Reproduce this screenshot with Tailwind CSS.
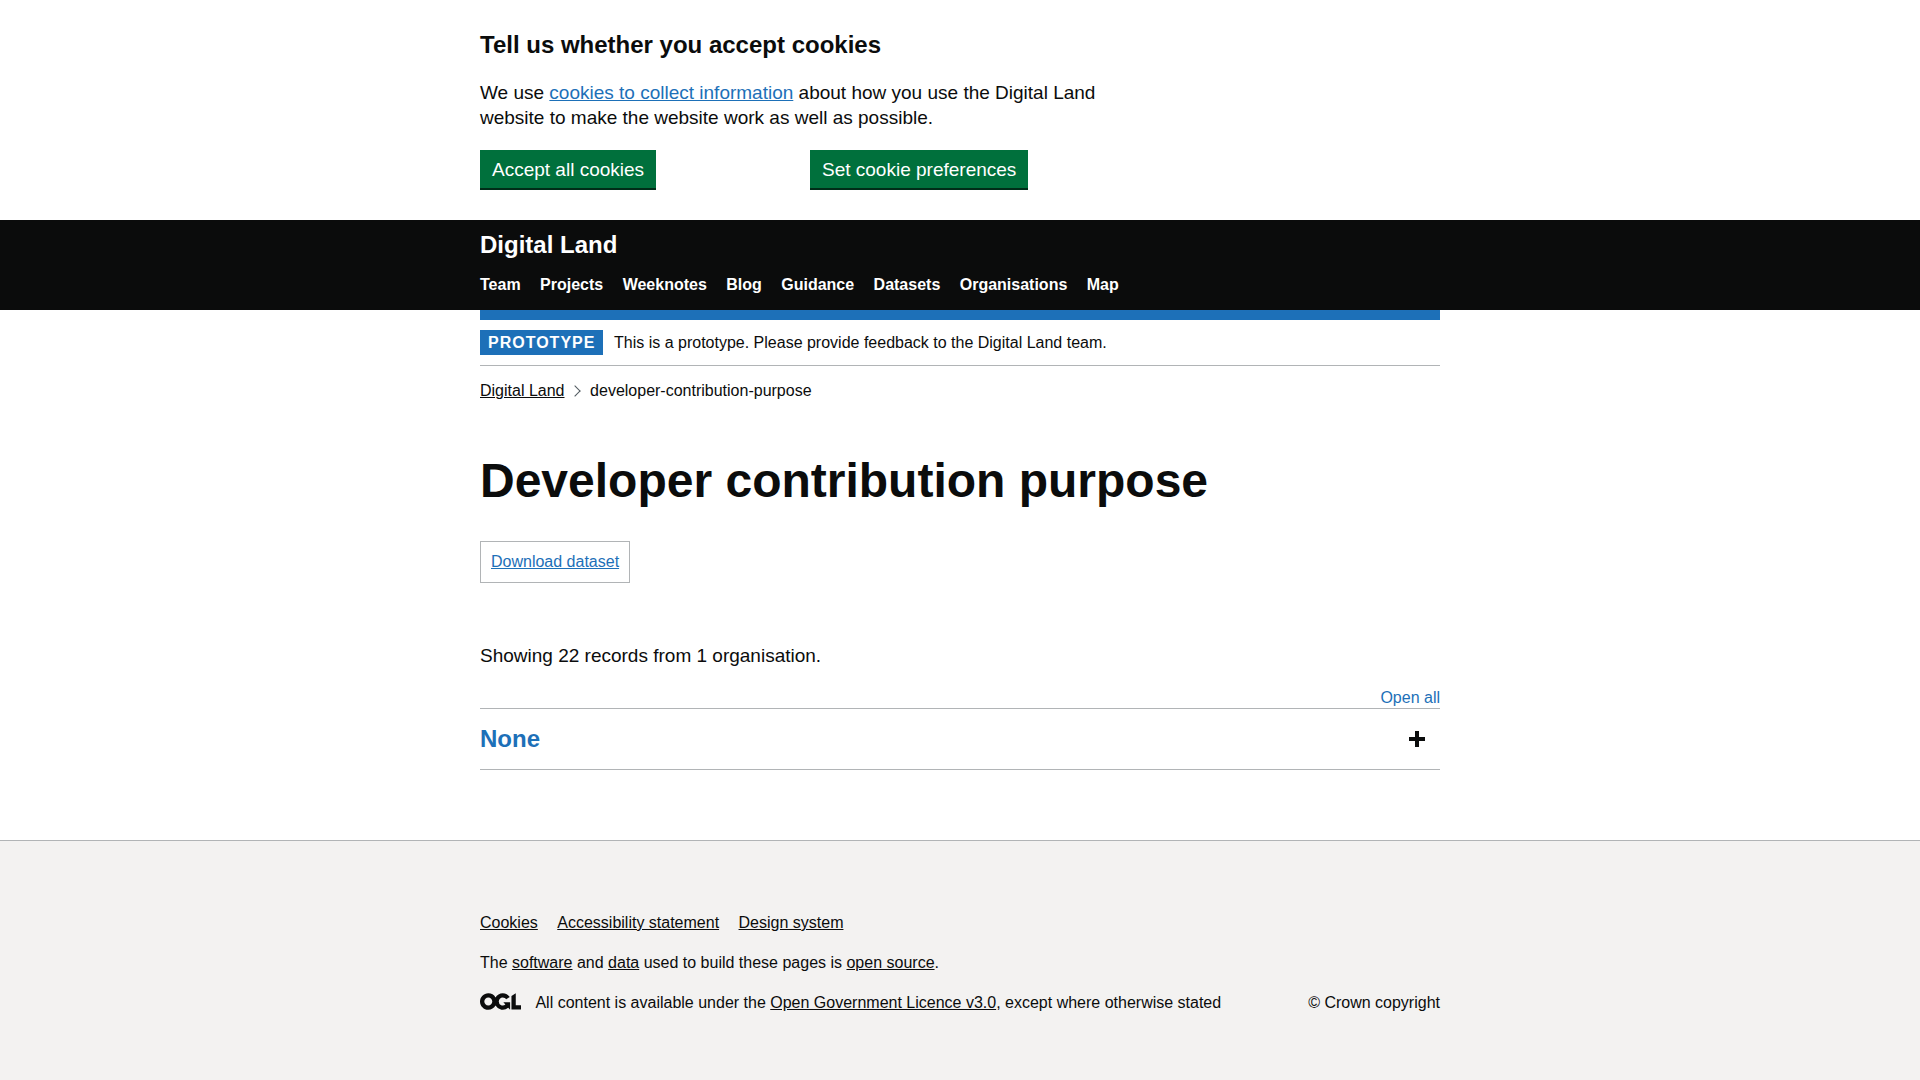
<!DOCTYPE html>
<html lang="en">
<head>
<meta charset="utf-8">
<title>Developer contribution purpose - Digital Land</title>
<script src="https://cdn.jsdelivr.net/npm/@tailwindcss/browser@4"></script>
</head>
<body class="bg-[#f3f2f1] font-['Liberation_Sans',Arial,sans-serif] text-[#0b0c0c] text-base leading-5 antialiased">
<section class="bg-white h-[220px] pt-[30px]">
  <div class="mx-auto w-[960px]">
    <h2 class="text-2xl leading-[30px] font-bold mb-5">Tell us whether you accept cookies</h2>
    <p class="text-[19px] leading-[25px] w-[640px] mb-5">We use <a href="#" class="text-[#1d70b8] underline">cookies to collect information</a> about how you use the Digital Land website to make the website work as well as possible.</p>
    <div class="grid grid-cols-[330px_1fr] justify-items-start">
      <button class="bg-[#00703c] text-white text-[19px] leading-[19px] h-[38px] px-3 shadow-[0_2px_0_#002d18]">Accept all cookies</button>
      <button class="bg-[#00703c] text-white text-[19px] leading-[19px] h-[38px] px-3 shadow-[0_2px_0_#002d18]">Set cookie preferences</button>
    </div>
  </div>
</section>
<header class="bg-[#0b0c0c] h-[90px] pt-2.5">
  <div class="mx-auto w-[960px] text-white font-bold">
    <a href="#" class="block text-2xl leading-[30px]">Digital Land</a>
    <nav class="flex gap-[19.45px] pt-[15px]"><a href="#">Team</a><a href="#">Projects</a><a href="#">Weeknotes</a><a href="#">Blog</a><a href="#">Guidance</a><a href="#">Datasets</a><a href="#">Organisations</a><a href="#">Map</a></nav>
  </div>
</header>
<div class="bg-white h-[530px]">
  <div class="mx-auto w-[960px]">
    <div class="h-2.5 bg-[#1d70b8]"></div>
    <div class="flex items-center h-[46px] border-b border-[#b1b4b6]">
      <strong class="bg-[#1d70b8] text-white tracking-[1px] leading-4 px-2 pt-[5px] pb-1 mr-[10.6px]">PROTOTYPE</strong>
      <span>This is a prototype. Please provide feedback to the Digital Land team.</span>
    </div>
    <nav class="flex items-center pt-[15px]">
      <a href="#" class="underline">Digital Land</a>
      <span class="ml-[6.9px] mr-[10.7px] size-2 rotate-45 border-t border-r border-[#505a5f]"></span>
      <span>developer-contribution-purpose</span>
    </nav>
    <h1 class="text-5xl leading-[50px] font-bold mt-[55px]">Developer contribution purpose</h1>
    <div class="mt-[35px] flex w-fit border border-[#b1b4b6] p-2.5"><a href="#" class="text-[#1d70b8] underline">Download dataset</a></div>
    <p class="text-[19px] leading-[25px] mt-[60px]">Showing 22 records from 1 organisation.</p>
    <div class="flex justify-end mt-5"><button class="text-[#1d70b8]">Open all</button></div>
    <div class="flex items-center justify-between border-y border-[#b1b4b6] h-[62px] pr-[15px]">
      <h2 class="text-2xl leading-[30px] font-bold text-[#1d70b8]">None</h2>
      <svg class="size-4" viewBox="0 0 16 16" fill="#0b0c0c" shape-rendering="crispEdges"><path d="M6 0h4v16H6zM0 6h16v4H0z"/></svg>
    </div>
  </div>
</div>
<footer class="border-t border-[#b1b4b6] pt-[72px] h-[240px]">
  <div class="mx-auto w-[960px]">
    <nav class="flex gap-[19.45px] mb-5"><a href="#" class="underline">Cookies</a><a href="#" class="underline">Accessibility statement</a><a href="#" class="underline">Design system</a></nav>
    <p class="mb-5">The <a href="#" class="underline">software</a> and <a href="#" class="underline">data</a> used to build these pages is <a href="#" class="underline">open source</a>.</p>
    <div class="flex">
      <svg class="w-[41px] h-[17px] mr-[14.45px]" viewBox="0 0 483.2 195.7" fill="#0b0c0c"><path d="M421.5 142.8V.1l-50.7 32.3v161.1h112.4v-50.7zm-122.3-9.6A47.12 47.12 0 0 1 221 97.8c0-26 21.1-47.1 47.1-47.1 16.7 0 31.4 8.7 39.7 21.8l42.7-27.2A97.63 97.63 0 0 0 268.1 0c-36.5 0-68.3 20.1-85.1 49.7A98 98 0 0 0 97.8 0C43.9 0 0 43.9 0 97.8s43.9 97.8 97.8 97.8c36.5 0 68.3-20.1 85.1-49.7a97.76 97.76 0 0 0 149.6 25.4l19.4 22.2h3v-87.8h-80l24.3 27.5zM97.8 145c-26 0-47.1-21.1-47.1-47.1s21.1-47.1 47.1-47.1 47.1 21.1 47.1 47.1S123.8 145 97.8 145"/></svg>
      <span>All content is available under the <a href="#" class="underline">Open Government Licence v3.0</a>, except where otherwise stated</span>
      <span class="ml-auto">© Crown copyright</span>
    </div>
  </div>
</footer>
</body>
</html>
